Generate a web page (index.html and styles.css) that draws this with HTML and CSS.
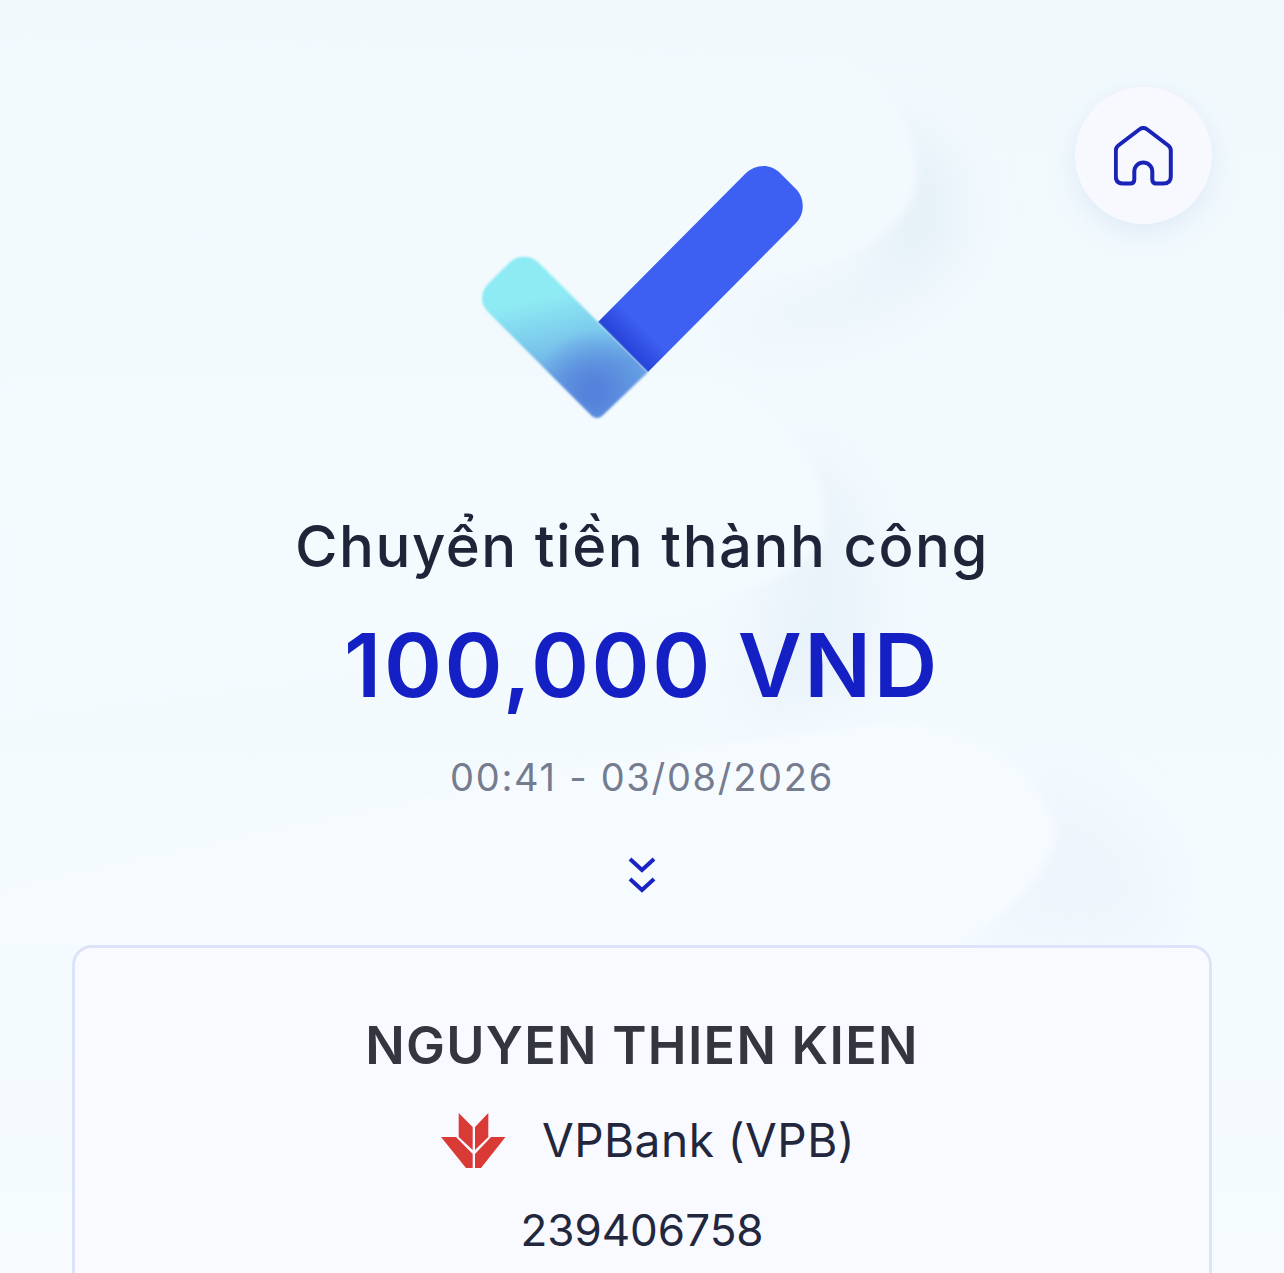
FILE: index.html
```html
<!DOCTYPE html>
<html lang="vi">
<head>
    <meta charset="UTF-8">
    <meta name="viewport" content="width=device-width, initial-scale=1.0">
    <title>Chuyển tiền thành công</title>
    <link rel="stylesheet" href="styles.css">
</head>
<body>
    <div class="page">
        <svg class="backdrop" viewBox="0 0 1284 1273" aria-hidden="true">
            <defs>
                <filter id="soft" x="-40%" y="-40%" width="180%" height="180%"><feGaussianBlur stdDeviation="26"/></filter>
                <filter id="softer" x="-30%" y="-30%" width="160%" height="160%"><feGaussianBlur stdDeviation="4"/></filter>
            </defs>
            <path d="M720 330 C860 335 975 280 955 190 C945 150 920 130 890 120 L880 280 Z" fill="#e4eff7" filter="url(#soft)"/>
            <path d="M0 40 L840 60 C900 90 925 150 915 190 C900 250 800 280 700 285 C500 290 200 240 0 195 Z" fill="#f3fafe" filter="url(#softer)"/>
            <path d="M800 450 C880 490 890 620 860 690 L740 720 Z" fill="#e9f3fa" filter="url(#soft)"/>
            <path d="M0 380 L720 380 C790 420 830 470 825 530 C810 610 500 660 0 715 Z" fill="#f4fbff" filter="url(#softer)"/>
            <path d="M1040 770 C1170 830 1180 900 1140 945 L990 945 Z" fill="#eef5fc" filter="url(#soft)"/>
            <path d="M0 890 C300 820 700 740 900 725 C1000 740 1050 790 1055 830 C1050 880 1000 920 950 945 L0 945 Z" fill="#f6fbff" filter="url(#softer)"/>
        </svg>

        <a class="home-btn" href="#" aria-label="Trang chủ">
            <svg class="home-icon" viewBox="0 0 60 60">
                <path transform="translate(-0.7 -0.5)" d="M10 58 H17 Q21 58 21 54 V46 A9 9 0 0 1 39 46 V54 Q39 58 43 58 H50 Q57.5 58 57.5 51 V25 Q57.5 22 55 20 L34 4 Q30 1 26 4 L5 20 Q2.5 22 2.5 25 V51 Q2.5 58 10 58 Z"/>
            </svg>
        </a>

        <div class="hero">
            <svg class="check" viewBox="0 0 360 280">
                <defs>
                    <linearGradient id="barShade" gradientUnits="userSpaceOnUse" x1="163" y1="197" x2="183" y2="177">
                        <stop offset="0" stop-color="#2642d8"/>
                        <stop offset="1" stop-color="#3d60f2"/>
                    </linearGradient>
                    <linearGradient id="leafFill" x1="0.35" y1="0.12" x2="0.5" y2="0.75">
                        <stop offset="0.2" stop-color="#8eebf3"/>
                        <stop offset="0.55" stop-color="#7fd0ee"/>
                        <stop offset="1" stop-color="#6aa7e4"/>
                    </linearGradient>
                    <radialGradient id="leafSpot" gradientUnits="userSpaceOnUse" cx="135" cy="242" r="62">
                        <stop offset="0.15" stop-color="#5582dc"/>
                        <stop offset="1" stop-color="#5582dc" stop-opacity="0"/>
                    </radialGradient>
                    <filter id="leafBlur"><feGaussianBlur stdDeviation="1"/></filter>
                </defs>
                <g transform="translate(-2 0)">
                    <path d="M138 172 L285 24 C295 14 310 13 320 23 L336 39 C345 48 345 64 336 73 L188 222 Z" fill="url(#barShade)"/>
                    <g filter="url(#leafBlur)">
                        <path d="M50 112 C58 105 70 105 78 112 L188 222 L142 266 Q137 270 132 266 L28 162 C20 154 20 142 28 134 Z" fill="url(#leafFill)"/>
                        <path d="M50 112 C58 105 70 105 78 112 L188 222 L142 266 Q137 270 132 266 L28 162 C20 154 20 142 28 134 Z" fill="url(#leafSpot)"/>
                    </g>
                </g>
            </svg>
            <h1 class="title">Chuyển tiền thành công</h1>
            <div class="amount">100,000 VND</div>
            <div class="time">00:41 - 03/08/2026</div>
            <svg class="more" viewBox="0 0 28 36">
                <path d="M2 2 L14 13 L26 2 M2 22 L14 33 L26 22"/>
            </svg>
        </div>

        <div class="card">
            <div class="name">NGUYEN THIEN KIEN</div>
            <div class="bank">
                <svg class="bank-logo" viewBox="0 0 65 55">
                    <path d="M17.7 0 L31.7 14 V37 L17.7 24 Z"/>
                    <path d="M47.3 0 L34 14 V37 L47.3 24 Z"/>
                    <path d="M0 24 H15 L31.7 41 V55 H25 Z"/>
                    <path d="M64.5 24 H50 L34 41 V55 H40 Z"/>
                </svg>
                <span class="bank-name">VPBank (VPB)</span>
            </div>
            <div class="account">239406758</div>
        </div>
    </div>
</body>
</html>
```

FILE: styles.css
```css
body {
    margin: 0;
    font-family: Inter, "Noto Sans", sans-serif;
    background-color: #f4fbff;
}
.page {
    position: relative;
    height: 1273px;
    padding: 150px 72px 0;
    box-sizing: border-box;
    overflow: hidden;
    background: linear-gradient(180deg, #f1f9fd 0%, #f3fafe 45%, #f5fbff 100%);
}
.backdrop {
    position: absolute;
    top: 0;
    left: 0;
    width: 1284px;
    height: 1273px;
}
.home-btn {
    position: absolute;
    top: 87px;
    right: 72px;
    display: flex;
    align-items: center;
    justify-content: center;
    width: 137px;
    height: 137px;
    border-radius: 50%;
    background-color: #f8f9fe;
    box-shadow: 0 8px 24px rgba(190, 205, 235, 0.35);
}
.home-icon {
    width: 60px;
    height: 60px;
    fill: none;
    stroke: #1a23b8;
    stroke-width: 4;
    stroke-linejoin: round;
}
.hero {
    position: relative;
    display: flex;
    flex-direction: column;
    align-items: center;
}
.check {
    width: 360px;
    height: 280px;
}
.title {
    margin: 80px 0 0;
    font-size: 58px;
    line-height: 72px;
    font-weight: 500;
    letter-spacing: 1.55px;
    color: #1f2438;
}
.amount {
    margin-top: 31px;
    font-size: 88px;
    line-height: 104px;
    font-weight: 600;
    letter-spacing: 2.6px;
    color: #1420c4;
}
.time {
    margin-top: 36px;
    font-size: 38px;
    line-height: 48px;
    letter-spacing: 1.7px;
    color: #767c8f;
}
.more {
    width: 28px;
    height: 36px;
    margin-top: 56px;
    fill: none;
    stroke: #1a23c4;
    stroke-width: 4;
}
.card {
    position: relative;
    margin-top: 52px;
    height: 420px;
    padding-top: 68px;
    box-sizing: border-box;
    border: 3px solid #dde3f8;
    border-radius: 20px;
    background-color: #f9faff;
    text-align: center;
}
.name {
    font-size: 52px;
    line-height: 60px;
    font-weight: 600;
    letter-spacing: 1.3px;
    color: #33363f;
}
.bank {
    display: flex;
    align-items: center;
    justify-content: center;
    gap: 36px;
    margin-top: 34px;
    padding-left: 12px;
}
.bank-logo {
    width: 65px;
    height: 55px;
    fill: #d93a36;
}
.bank-name {
    font-size: 46px;
    line-height: 60px;
    letter-spacing: 0.5px;
    color: #22273d;
}
.account {
    margin-top: 32px;
    font-size: 44px;
    line-height: 56px;
    color: #22273d;
}
```
